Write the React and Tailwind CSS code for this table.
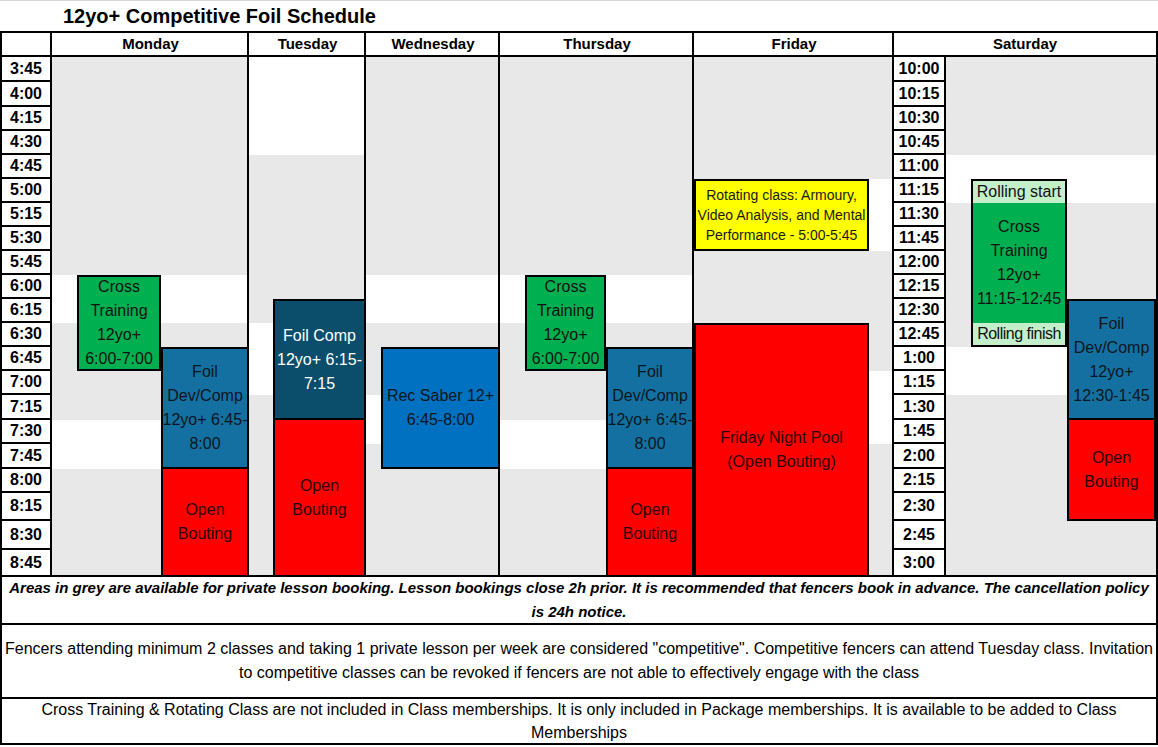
const morningTimes = ['3:45', '4:00', '4:15', '4:30', '4:45', '5:00', '5:15', '5:30', '5:45', '6:00', '6:15', '6:30', '6:45', '7:00', '7:15', '7:30', '7:45', '8:00', '8:15', '8:30', '8:45'];
const saturdayTimes = ['10:00', '10:15', '10:30', '10:45', '11:00', '11:15', '11:30', '11:45', '12:00', '12:15', '12:30', '12:45', '1:00', '1:15', '1:30', '1:45', '2:00', '2:15', '2:30', '2:45', '3:00'];

const rowStarts = [
  'row-start-2', 'row-start-3', 'row-start-4', 'row-start-5', 'row-start-6', 'row-start-7', 'row-start-8',
  'row-start-9', 'row-start-10', 'row-start-11', 'row-start-12', 'row-start-13', 'row-start-14', 'row-start-15',
  'row-start-16', 'row-start-17', 'row-start-18', 'row-start-19', 'row-start-20', 'row-start-21', 'row-start-22',
];

// grey = open for private lessons
const greyBands = [
  'col-start-2 col-span-3 row-start-2 row-span-9',
  'col-start-2 col-span-3 row-start-13 row-span-1',
  'col-start-2 col-span-2 row-start-14 row-span-3',
  'col-start-2 col-span-2 row-start-19 row-span-4',
  'col-start-5 col-span-2 row-start-6 row-span-6',
  'col-start-5 col-span-1 row-start-12 row-span-1',
  'col-start-5 col-span-1 row-start-16 row-span-7',
  'col-start-7 col-span-2 row-start-2 row-span-9',
  'col-start-7 col-span-2 row-start-13 row-span-1',
  'col-start-7 col-span-1 row-start-14 row-span-2',
  'col-start-7 col-span-1 row-start-18 row-span-5',
  'col-start-8 col-span-1 row-start-19 row-span-4',
  'col-start-9 col-span-3 row-start-2 row-span-9',
  'col-start-9 col-span-3 row-start-13 row-span-1',
  'col-start-9 col-span-2 row-start-14 row-span-3',
  'col-start-9 col-span-2 row-start-19 row-span-4',
  'col-start-12 col-span-2 row-start-2 row-span-5',
  'col-start-12 col-span-2 row-start-10 row-span-3',
  'col-start-13 col-span-1 row-start-13 row-span-2',
  'col-start-13 col-span-1 row-start-18 row-span-5',
  'col-start-15 col-span-3 row-start-2 row-span-4',
  'col-start-15 col-span-1 row-start-8 row-span-6',
  'col-start-15 col-span-2 row-start-16 row-span-7',
  'col-start-17 col-span-1 row-start-8 row-span-4',
  'col-start-17 col-span-1 row-start-21 row-span-2',
];

const green = 'bg-[#00b050] text-[#111]';
const teal = 'bg-[#1470a0] text-[#0b1620]';
const navy = 'bg-[#0b4e6b] text-white';
const blue = 'bg-[#0070c0] text-[#0b1620]';
const red = 'bg-[#ff0000] text-[#2a0000]';

const blocks = [
  { pos: 'col-start-3 row-start-11 row-span-4', color: green, lines: ['Cross', 'Training', '12yo+', '6:00-7:00'] },
  { pos: 'col-start-4 row-start-14 row-span-5', color: teal, lines: ['Foil', 'Dev/Comp', '12yo+ 6:45-', '8:00'] },
  { pos: 'col-start-4 row-start-19 row-span-4 border-t-0 border-b-0', color: red, lines: ['Open', 'Bouting'] },
  { pos: 'col-start-6 row-start-12 row-span-5', color: navy, lines: ['Foil Comp', '12yo+ 6:15-', '7:15'] },
  { pos: 'col-start-6 row-start-17 row-span-6 border-t-0 border-b-0', color: red, lines: ['Open', 'Bouting'] },
  { pos: 'col-start-8 row-start-14 row-span-5', color: blue, lines: ['Rec Saber 12+', '6:45-8:00'] },
  { pos: 'col-start-10 row-start-11 row-span-4', color: green, lines: ['Cross', 'Training', '12yo+', '6:00-7:00'] },
  { pos: 'col-start-11 row-start-14 row-span-5', color: teal, lines: ['Foil', 'Dev/Comp', '12yo+ 6:45-', '8:00'] },
  { pos: 'col-start-11 row-start-19 row-span-4 border-t-0 border-b-0', color: red, lines: ['Open', 'Bouting'] },
  { pos: 'col-start-12 row-start-13 row-span-10 border-b-0', color: red, lines: ['Friday Night Pool', '(Open Bouting)'] },
  { pos: 'col-start-17 row-start-12 row-span-5', color: teal, lines: ['Foil', 'Dev/Comp', '12yo+', '12:30-1:45'] },
  { pos: 'col-start-17 row-start-17 row-span-4 border-t-0', color: red, lines: ['Open', 'Bouting'] },
];

const days = [
  { name: 'Monday', pos: 'col-start-2 col-span-3' },
  { name: 'Tuesday', pos: 'col-start-5 col-span-2' },
  { name: 'Wednesday', pos: 'col-start-7 col-span-2' },
  { name: 'Thursday', pos: 'col-start-9 col-span-3' },
  { name: 'Friday', pos: 'col-start-12 col-span-2' },
  { name: 'Saturday', pos: 'col-start-14 col-span-4' },
];

const frames = [
  'col-start-2 col-span-3',
  'col-start-5 col-span-2',
  'col-start-7 col-span-2',
  'col-start-9 col-span-3',
  'col-start-12 col-span-2',
];

function Block({ pos, color, lines }) {
  return (
    <div className={`${pos} ${color} border-2 border-black flex flex-col items-center justify-center text-center text-[16px] leading-6 whitespace-nowrap`}>
      {lines.map((line) => (
        <span key={line}>{line}</span>
      ))}
    </div>
  );
}

function TimeCell({ time, index, col }) {
  const last = index === 20;
  return (
    <div className={`${col} ${rowStarts[index]} bg-white border-r-2 border-black ${last ? '' : 'border-b-2'} flex items-center justify-center text-[16px] font-bold`}>
      {time}
    </div>
  );
}

export default function App() {
  return (
    <div className="w-[1158px] h-[747px] bg-white text-black font-['Liberation_Sans',Arial,sans-serif] overflow-hidden">
      <div className="h-[31px] border-t border-[#d6d6d6] pl-[63px] text-[20px] font-bold leading-[30px]">
        12yo+ Competitive Foil Schedule
      </div>

      <div className="border-2 border-black">
        <div className="grid grid-cols-[50px_25px_84px_88px_24px_93px_15px_119px_25px_81px_88px_175px_25px_52px_25px_96px_89px] grid-rows-[24px_25px_25px_24px_24px_24px_24px_24px_24px_24px_24px_24px_24px_24px_24px_25px_24px_25px_24px_28px_29px_25px]">
          <div className="col-start-1 row-start-1 border-r-2 border-b-2 border-black" />
          {days.map((day) => (
            <div key={day.name} className={`${day.pos} row-start-1 border-b-2 border-black flex items-center justify-center text-[15px] font-bold`}>
              {day.name}
            </div>
          ))}

          {greyBands.map((band) => (
            <div key={band} className={`${band} bg-[#e8e8e8]`} />
          ))}

          {morningTimes.map((time, i) => (
            <TimeCell key={time} time={time} index={i} col="col-start-1" />
          ))}
          {saturdayTimes.map((time, i) => (
            <TimeCell key={time} time={time} index={i} col="col-start-14" />
          ))}

          {blocks.map((block) => (
            <Block key={block.pos} {...block} />
          ))}

          <div className="col-start-12 row-start-7 row-span-3 bg-[#ffff00] border-2 border-black flex flex-col items-center justify-center text-center text-[14px] leading-5 text-[#1a1a1a] whitespace-nowrap">
            <span>Rotating class: Armoury,</span>
            <span>Video Analysis, and Mental</span>
            <span>Performance - 5:00-5:45</span>
          </div>

          <div className="col-start-16 row-start-7 row-span-7 border-2 border-black grid grid-rows-[22px_1fr_22px] text-[16px] text-[#111] whitespace-nowrap">
            <div className="bg-[#c3efcb] flex items-center justify-center">Rolling start</div>
            <div className="bg-[#00b050] flex flex-col items-center justify-center leading-6">
              <span>Cross</span>
              <span>Training</span>
              <span>12yo+</span>
              <span>11:15-12:45</span>
            </div>
            <div className="bg-[#c3efcb] flex items-center justify-center tracking-[-0.5px]">Rolling finish</div>
          </div>

          {frames.map((frame) => (
            <div key={frame} className={`${frame} row-start-1 row-span-22 border-r-2 border-black pointer-events-none`} />
          ))}
        </div>

        <div className="h-[48px] border-t-2 border-black flex flex-col items-center justify-center text-center text-[15px] font-bold italic leading-6 whitespace-nowrap">
          <span>Areas in grey are available for private lesson booking. Lesson bookings close 2h prior. It is recommended that fencers book in advance. The cancellation policy</span>
          <span>is 24h notice.</span>
        </div>
        <div className="h-[74px] border-t-2 border-black flex flex-col items-center justify-center text-center text-[16px] leading-6 whitespace-nowrap">
          <span>Fencers attending minimum 2 classes and taking 1 private lesson per week are considered "competitive". Competitive fencers can attend Tuesday class. Invitation</span>
          <span>to competitive classes can be revoked if fencers are not able to effectively engage with the class</span>
        </div>
        <div className="h-[46px] border-t-2 border-black flex flex-col items-center justify-center text-center text-[16px] leading-[23px] whitespace-nowrap">
          <span>Cross Training &amp; Rotating Class are not included in Class memberships. It is only included in Package memberships. It is available to be added to Class</span>
          <span>Memberships</span>
        </div>
      </div>
    </div>
  );
}
